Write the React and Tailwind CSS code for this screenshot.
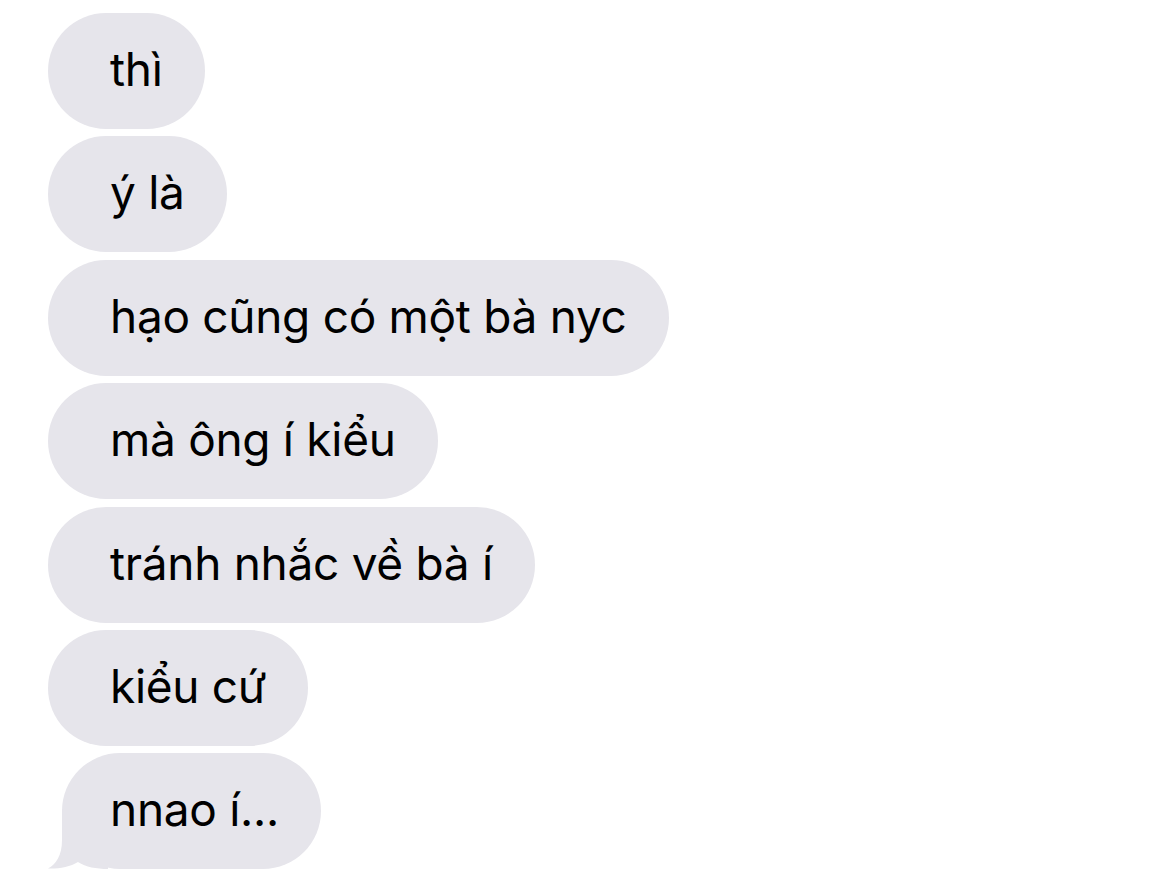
const MESSAGES = [
  "thì",
  "ý là",
  "hạo cũng có một bà nyc",
  "mà ông í kiểu",
  "tránh nhắc về bà í",
  "kiểu cứ",
];

const BUBBLE = "h-[116px] flex items-center rounded-[58px] bg-[#e6e5eb] text-black text-[46px] tracking-[-0.3px] leading-none whitespace-nowrap";

export default function App() {
  return (
    <div
      className="w-[1170px] h-[887px] bg-white overflow-hidden pt-[13px] pl-[48px] flex flex-col items-start gap-[7.4px]"
      style={{ fontFamily: "Inter, 'Noto Sans', sans-serif" }}
    >
      {MESSAGES.map((m) => (
        <div key={m} className={`${BUBBLE} pl-[62px] pr-[42px]`}>
          <span className="-mt-[4px]">{m}</span>
        </div>
      ))}

      {/* last bubble, with tail */}
      <div className="relative ml-[14px]">
        <svg
          className="absolute left-[-14px] bottom-0"
          width="60"
          height="60"
          viewBox="0 0 60 60"
        >
          <path
            d="M14 0 L14 31 C14 47 8 55 0 59.5 C10 60 22 58 30 53 C38 58 48 60 60 60 L60 0 Z"
            fill="#e6e5eb"
          />
        </svg>
        <div className={`${BUBBLE} relative pl-[48px] pr-[42px]`}>
          <span className="-mt-[4px]">nnao í...</span>
        </div>
      </div>
    </div>
  );
}
